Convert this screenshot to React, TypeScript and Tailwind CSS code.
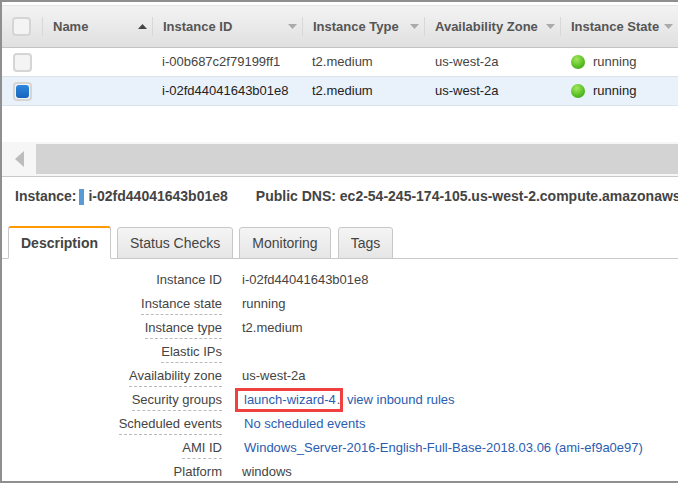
import React from 'react';

const columns = [
  { label: 'Name', width: 'w-[110px]', arrow: 'up' },
  { label: 'Instance ID', width: 'w-[150px]', arrow: 'down' },
  { label: 'Instance Type', width: 'w-[122px]', arrow: 'down' },
  { label: 'Availability Zone', width: 'w-[136px]', arrow: 'down' },
  { label: 'Instance State', width: 'w-[118px]', arrow: 'down' },
];

const rows = [
  { id: 'i-00b687c2f79199ff1', selected: false },
  { id: 'i-02fd44041643b01e8', selected: true },
];

const details = [
  { label: 'Instance ID', value: 'i-02fd44041643b01e8' },
  { label: 'Instance state', value: 'running', dashed: true },
  { label: 'Instance type', value: 't2.medium', dashed: true },
  { label: 'Elastic IPs', value: '', dashed: true },
  { label: 'Availability zone', value: 'us-west-2a', dashed: true },
  { label: 'Security groups', dashed: true, kind: 'security' },
  { label: 'Scheduled events', link: 'No scheduled events', dashed: true },
  { label: 'AMI ID', link: 'Windows_Server-2016-English-Full-Base-2018.03.06 (ami-ef9a0e97)', dashed: true },
  { label: 'Platform', value: 'windows' },
];

const Checkbox = ({ checked }: { checked?: boolean }) => (
  <div className="w-[19px] h-[19px] rounded-[4px] border-2 border-[#d5d5d5] bg-[#f4f4f4] p-[1px]">
    {checked && <div className="w-full h-full rounded-[3px] bg-gradient-to-b from-[#2f86dc] to-[#1565bd]" />}
  </div>
);

const Arrow = ({ dir }: { dir: string }) => (
  <svg width="9" height="5" viewBox="0 0 9 5" className="shrink-0">
    {dir === 'up' ? <path d="M0 5 L4.5 0 L9 5 Z" fill="#444" /> : <path d="M0 0 L9 0 L4.5 5 Z" fill="#aaa" />}
  </svg>
);

const StatusDot = () => (
  <div className="w-[14px] h-[14px] rounded-full bg-[radial-gradient(circle_at_40%_30%,#a4e85c,#4fb81f_65%,#3d9a16)]" />
);

const tabClass = 'h-[32px] -mb-px px-[12px] flex items-center border border-[#c8c8c8] bg-gradient-to-b from-[#f5f5f5] to-[#e6e6e6] rounded-t-[3px]';

export default function App() {
  return (
    <div className="w-[678px] h-[483px] overflow-hidden bg-white border-t-2 border-b-2 border-l-2 border-[#8f8f8f] font-['Liberation_Sans',Arial,sans-serif] text-[13px] text-[#444]">
      <div className="h-[3px]" />
      <div className="flex h-[43px] items-center border-t border-b border-t-[#e4e4e4] border-b-[#c4c4c4] bg-gradient-to-b from-[#f3f3f3] to-[#e0e0e0]">
        <div className="w-[40px] pl-[10px] shrink-0">
          <Checkbox />
        </div>
        {columns.map((c) => (
          <div key={c.label} className={`${c.width} shrink-0 h-[19px] flex items-center justify-between border-l border-[#d8d8d8] pl-[10px] pr-[5px] font-bold text-[#555]`}>
            <span className="whitespace-nowrap">{c.label}</span>
            <Arrow dir={c.arrow} />
          </div>
        ))}
      </div>
      {rows.map((r) => (
        <div key={r.id} className={`flex h-[29px] items-center border-b border-[#dde3ea] ${r.selected ? 'bg-[#e9f1fb] text-[#222]' : 'bg-white'}`}>
          <div className="w-[160px] pl-[11px] shrink-0">
            <Checkbox checked={r.selected} />
          </div>
          <div className="w-[150px] shrink-0">{r.id}</div>
          <div className="w-[123px] shrink-0">t2.medium</div>
          <div className="w-[136px] shrink-0">us-west-2a</div>
          <div className="flex items-center gap-[8px]">
            <StatusDot />
            <span>running</span>
          </div>
        </div>
      ))}
      <div className="h-[36px]" />
      <div className="flex h-[35px] border-b border-[#c8c8c8] bg-[#f6f6f6] py-[2px]">
        <div className="w-[34px] flex items-center pl-[13px]">
          <svg width="9" height="16" viewBox="0 0 9 16">
            <path d="M9 0 V16 L0 8 Z" fill="#bdbdbd" />
          </svg>
        </div>
        <div className="flex-1 bg-[#d3d3d3]" />
      </div>
      <div className="flex items-center h-[39px] mb-[11px] pl-[13px] text-[14px] font-bold text-[#444] whitespace-nowrap">
        <span className="shrink-0">Instance:</span>
        <span className="shrink-0 w-[5px] h-[16px] bg-[#5b9bd5] ml-[3px] mr-[4px]" />
        <span className="shrink-0">i-02fd44041643b01e8</span>
        <span className="shrink-0 ml-[28px]">Public DNS: ec2-54-245-174-105.us-west-2.compute.amazonaws.com</span>
      </div>
      <div className="flex items-end h-[32px] pl-[6px] gap-[6px] border-b border-[#c8c8c8] text-[14px]">
        <div className="h-[33px] -mb-px px-[12px] flex items-center border border-[#c8c8c8] border-t-2 border-t-[#f90] border-b-white bg-white rounded-t-[3px] font-bold">Description</div>
        <div className={tabClass}>Status Checks</div>
        <div className={tabClass}>Monitoring</div>
        <div className={`${tabClass} ml-px`}>Tags</div>
      </div>
      <div className="pt-[10px]">
        {details.map((d) => (
          <div key={d.label} className="flex h-[24px]">
            <div className="w-[220px] shrink-0 flex justify-end">
              <span className={`h-[22px] leading-[22px] whitespace-nowrap ${d.dashed ? 'border-b border-dashed border-[#bbb]' : ''}`}>{d.label}</span>
            </div>
            <div className="pl-[20px] leading-[22px] whitespace-nowrap">
              {d.value}
              {d.link && <span className="text-[#2a5db0] pl-[2px]">{d.link}</span>}
              {d.kind === 'security' && (
                <span className="relative text-[#2a5db0] pl-[2px]">
                  <span>launch-wizard-4</span>
                  <span className="text-[#444] ml-px mr-[6.5px]">.</span>
                  <span>view inbound rules</span>
                  <span className="absolute left-[-7px] top-[-4px] w-[108px] h-[24px] border-[3px] border-[#f04040]" />
                </span>
              )}
            </div>
          </div>
        ))}
      </div>
    </div>
  );
}
